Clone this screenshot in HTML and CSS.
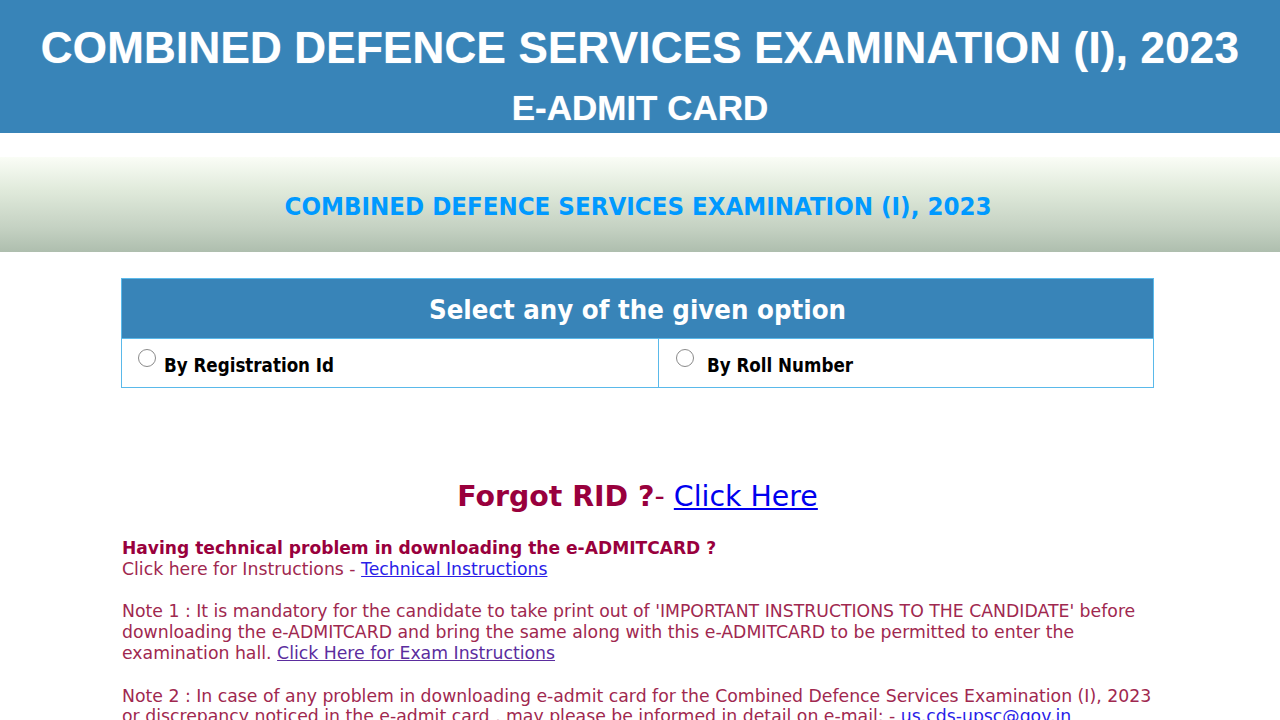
FILE: index.html
```html
<!DOCTYPE html>
<html>
<head>
<meta charset="utf-8">
<link rel="stylesheet" href="styles.css">
</head>
<body>
<div class="topbar">
  <div class="title1">COMBINED DEFENCE SERVICES EXAMINATION (I), 2023</div>
  <div class="title2">E-ADMIT CARD</div>
</div>
<div class="band">
  <div class="band-title">COMBINED DEFENCE SERVICES EXAMINATION (I), 2023</div>
</div>
<div class="container">
  <div class="options">
    <div class="options-head">Select any of the given option</div>
    <div class="options-row">
      <label class="opt"><span class="radio"></span>By Registration Id</label>
      <label class="opt opt-right"><span class="radio radio-r"></span>By Roll Number</label>
    </div>
  </div>
  <div class="forgot"><span class="forgot-b">Forgot RID ?</span>- <a class="link" href="#">Click Here</a></div>
  <div class="notes">
    <div class="strong">Having technical problem in downloading the e-ADMITCARD ?</div>
    <div>Click here for Instructions - <a class="link2" href="#">Technical Instructions</a></div>
    <p>Note 1 : It is mandatory for the candidate to take print out of 'IMPORTANT INSTRUCTIONS TO THE CANDIDATE' before downloading the e-ADMITCARD and bring the same along with this e-ADMITCARD to be permitted to enter the examination hall. <a class="visited" href="#">Click Here for Exam Instructions</a></p>
    <p>Note 2 : In case of any problem in downloading e-admit card for the Combined Defence Services Examination (I), 2023 or discrepancy noticed in the e-admit card , may please be informed in detail on e-mail: - <a class="link2" href="#">us.cds-upsc@gov.in</a></p>
  </div>
</div>
</body>
</html>
```
FILE: styles.css
```css
html, body { margin: 0; padding: 0; background: #fff; }
body { font-family: "DejaVu Sans", Verdana, sans-serif; overflow: hidden; }
.topbar {
  background: #3884b8;
  height: 133px;
  color: #fff;
  text-align: center;
  font-family: "Liberation Sans", Arial, sans-serif;
  font-weight: bold;
  text-shadow: 0 0 1px rgba(255,255,255,0.6);
}
.title1 { font-size: 44px; line-height: 44px; padding-top: 26px; letter-spacing: 0.2px; }
.title2 { font-size: 35px; line-height: 36px; padding-top: 20px; }
.band {
  margin-top: 24px;
  height: 95px;
  background: linear-gradient(to bottom, #fafdf6 0%, #e0eadb 35%, #c4d1c2 75%, #aebeae 100%);
  display: flex; align-items: center; justify-content: center;
}
.band-title {
  font-family: "DejaVu Sans Condensed", Tahoma, sans-serif;
  font-weight: bold; font-size: 25.6px; color: #0099ff; padding-top: 2px; padding-right: 4px;
}
.container { width: 1033px; margin-left: 121px; }
.options { margin-top: 26px; border: 1px solid #5ab9ea; }
.options-head {
  background: #3884b8; color: #fff; height: 59px;
  display: flex; align-items: center; justify-content: center;
  font-family: "DejaVu Sans Condensed", Tahoma, sans-serif; font-weight: bold; font-size: 27.3px;
  padding-top: 2px; box-sizing: border-box;
}
.options-row { display: flex; border-top: 1px solid #5ab9ea; height: 48px; }
.opt {
  flex: 0 0 536px; display: flex; align-items: center; padding-left: 16px; box-sizing: border-box;
  font-family: "DejaVu Sans Condensed", Tahoma, sans-serif; font-weight: bold; font-size: 18.6px; color: #000;
  padding-top: 4px;
}
.opt-right { flex: 1; border-left: 1px solid #5ab9ea; padding-left: 17px; }
.radio {
  width: 18px; height: 18px; border: 1px solid #8a8a8a; border-radius: 50%; box-sizing: border-box;
  margin-right: 8px; position: relative; top: -7px; background: #fff;
}
.radio-r { margin-right: 13px; }
.forgot { text-align: center; margin-top: 92px; font-size: 28.4px; color: #99003d; }
.forgot-b { font-weight: bold; }
.link { color: #0000ee; text-decoration: underline; }
.notes {
  margin-top: 25px; margin-right: -10px; font-size: 17.3px; line-height: 20.7px;
  color: #a0284f; padding-left: 1px;
}
.strong { font-weight: bold; color: #99003d; font-size: 17.1px; }
.notes p { margin: 22px 0 0 0; }
.link2 { color: #2a1ee8; text-decoration: underline; }
.visited { color: #5b2d9e; text-decoration: underline; }
```
